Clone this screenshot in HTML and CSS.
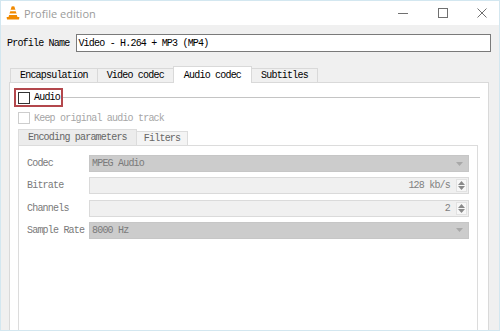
FILE: index.html
```html
<!DOCTYPE html>
<html>
<head>
<meta charset="utf-8">
<title>Profile edition</title>
<link rel="stylesheet" href="styles.css">
</head>
<body>
<div class="window">
  <div class="titlebar">
    <svg class="app-icon" width="14" height="14" viewBox="0 0 14 14">
      <path d="M5.6 0.6 Q7 0 8.4 0.6 L11.6 11.4 L2.4 11.4 Z" fill="#f18a00"/>
      <path d="M4.35 3.8 L9.65 3.8 L10.1 5.3 L3.9 5.3 Z" fill="#fff"/>
      <path d="M3.3 7.6 L10.7 7.6 L11.15 9.1 L2.85 9.1 Z" fill="#fff"/>
      <path d="M0.6 11 L13.4 11 L13 13.6 L1 13.6 Z" fill="#f18a00"/>
    </svg>
    <span class="title">Profile edition</span>
    <div class="caption-buttons">
      <svg width="10" height="10" viewBox="0 0 10 10"><path d="M0 5.5H10" stroke="#707070" stroke-width="1"/></svg>
      <svg width="10" height="10" viewBox="0 0 10 10"><rect x="0.5" y="0.5" width="9" height="9" fill="none" stroke="#707070" stroke-width="1"/></svg>
      <svg width="10" height="10" viewBox="0 0 10 10"><path d="M0.5 0.5L9.5 9.5M9.5 0.5L0.5 9.5" stroke="#707070" stroke-width="1"/></svg>
    </div>
  </div>
  <div class="content">
    <div class="name-row">
      <span class="label">Profile Name</span>
      <div class="textfield">Video - H.264 + MP3 (MP4)</div>
    </div>
    <div class="tabs">
      <div class="tab">Encapsulation</div>
      <div class="tab">Video codec</div>
      <div class="tab active">Audio codec</div>
      <div class="tab">Subtitles</div>
    </div>
    <div class="panel">
      <div class="group-head">
        <div class="highlight"><span class="check"></span><span>Audio</span></div>
        <div class="rule"></div>
      </div>
      <div class="keep"><span class="check disabled"></span><span>Keep original audio track</span></div>
      <div class="subtabs">
        <div class="subtab active">Encoding parameters</div>
        <div class="subtab">Filters</div>
      </div>
      <div class="subpanel">
        <div class="form">
          <span class="flabel">Codec</span>
          <div class="combo"><span>MPEG Audio</span>
            <svg class="drop" width="7" height="4" viewBox="0 0 7 4"><path d="M0 0H7L3.5 4Z" fill="#a8a8a8"/></svg>
          </div>
          <span class="flabel">Bitrate</span>
          <div class="spin"><span>128 kb/s</span>
            <div class="spin-btn">
              <svg width="7" height="4" viewBox="0 0 7 4"><path d="M0 4H7L3.5 0Z" fill="#8a8a8a"/></svg>
              <svg width="7" height="4" viewBox="0 0 7 4"><path d="M0 0H7L3.5 4Z" fill="#8a8a8a"/></svg>
            </div>
          </div>
          <span class="flabel">Channels</span>
          <div class="spin"><span>2</span>
            <div class="spin-btn">
              <svg width="7" height="4" viewBox="0 0 7 4"><path d="M0 4H7L3.5 0Z" fill="#8a8a8a"/></svg>
              <svg width="7" height="4" viewBox="0 0 7 4"><path d="M0 0H7L3.5 4Z" fill="#8a8a8a"/></svg>
            </div>
          </div>
          <span class="flabel">Sample Rate</span>
          <div class="combo"><span>8000 Hz</span>
            <svg class="drop" width="7" height="4" viewBox="0 0 7 4"><path d="M0 0H7L3.5 4Z" fill="#a8a8a8"/></svg>
          </div>
        </div>
      </div>
    </div>
  </div>
</div>
</body>
</html>
```

FILE: styles.css
```css
* { box-sizing: border-box; }
html, body { margin: 0; padding: 0; }
body { width: 500px; height: 331px; overflow: hidden; background: #f0f0f0; }

.window {
  width: 500px; height: 331px;
  border: 1px solid #d3e7f0;
  display: flex; flex-direction: column;
  background: #f0f0f0;
  overflow: hidden;
}

.titlebar {
  height: 24px; flex: none;
  background: #fff;
  display: flex; align-items: center;
  padding-left: 5px;
}
.app-icon { display: block; flex: none; }
.title {
  margin-left: 4px;
  font-family: "Open Sans", "Noto Sans", sans-serif;
  font-size: 11px;
  color: #9b9b9b;
}
.caption-buttons {
  margin-left: auto;
  display: flex; align-items: center;
  gap: 29.5px;
  padding-right: 12px;
}
.caption-buttons svg { display: block; }

.content {
  flex: 1; min-height: 0;
  display: flex; flex-direction: column;
  padding: 9px 8px 0 6px;
  font-family: "Liberation Mono", monospace;
  font-size: 10px;
  letter-spacing: -0.8px;
  color: #000;
}

.name-row { display: flex; align-items: center; gap: 7px; height: 18px; flex: none; }
.label { white-space: nowrap; }
.textfield {
  flex: 1; height: 18px;
  border: 1px solid #7a7a7a;
  background: #fff;
  padding-left: 1px;
  display: flex; align-items: center;
  white-space: nowrap;
}

.tabs { display: flex; align-items: flex-end; margin: 14px 2px 0 3px; flex: none; }
.tab {
  height: 14px;
  border: 1px solid #d9d9d9; border-bottom: 0;
  background: #f0f0f0;
  padding: 0 9px;
  display: flex; align-items: center;
  white-space: nowrap;
}
.tab + .tab { margin-left: -1px; }
.tab.active {
  height: 17px;
  background: #fff;
  padding: 0 10px;
  margin-bottom: -1px;
  position: relative; z-index: 1;
}

.panel {
  flex: 1; min-height: 0;
  margin: 0 2px;
  border: 1px solid #d9d9d9; border-bottom: 0;
  background: #fff;
  padding: 5px 0 0 4px;
  display: flex; flex-direction: column;
}

.group-head { display: flex; align-items: center; height: 19px; flex: none; }
.highlight {
  display: flex; align-items: center; gap: 4px;
  height: 19px;
  border: 2px solid #b3474c;
  padding: 0 1px 0 2px;
}
.check {
  width: 12px; height: 12px; flex: none;
  border: 1px solid #333;
  background: #fff;
}
.check.disabled { border-color: #cdcdcd; }
.rule { flex: 1; height: 1px; background: #c4c4c4; margin-right: 8px; }

.keep {
  display: flex; align-items: center; gap: 4px;
  height: 12px; flex: none;
  margin: 5px 0 0 4px;
  color: #a6a6a6;
}

.subtabs { display: flex; align-items: flex-end; margin: 5px 0 0 4px; flex: none; }
.subtab {
  height: 14px;
  border: 1px solid #dcdcdc; border-bottom: 0;
  background: #f4f4f4;
  padding: 0 7px;
  display: flex; align-items: center;
  color: #666;
  white-space: nowrap;
}
.subtab.active { height: 16px; background: #ececec; padding: 0 9px; }
.subtab + .subtab { margin-left: -1px; }

.subpanel {
  flex: 1; min-height: 0;
  margin: 0 10px 0 4px;
  border: 1px solid #dcdcdc; border-bottom: 0;
  background: #fff;
  padding: 9px 8px 0 8px;
}

.form {
  display: grid;
  grid-template-columns: 62px 1fr;
  grid-auto-rows: 17px;
  row-gap: 5.3px;
  align-items: center;
}
.flabel { color: #7a7a7a; white-space: nowrap; }

.combo {
  height: 17px;
  background: #cccccc;
  border: 1px solid #c6c6c6;
  padding: 0 5px 0 2px;
  display: flex; align-items: center;
  color: #7a7a7a;
}
.combo .drop { margin-left: auto; display: block; }

.spin {
  height: 17px;
  background: #f0f0f0;
  border: 1px solid #dadada;
  padding: 0 1px 0 2px;
  display: flex; align-items: center; justify-content: flex-end;
  color: #808080;
}
.spin-btn {
  width: 11px; height: 13px;
  margin-left: 6px;
  background: #f7f7f7;
  border: 1px solid #e2e2e2;
  display: flex; flex-direction: column; align-items: center; justify-content: center;
  gap: 1px;
}
.spin-btn svg { display: block; }
```
